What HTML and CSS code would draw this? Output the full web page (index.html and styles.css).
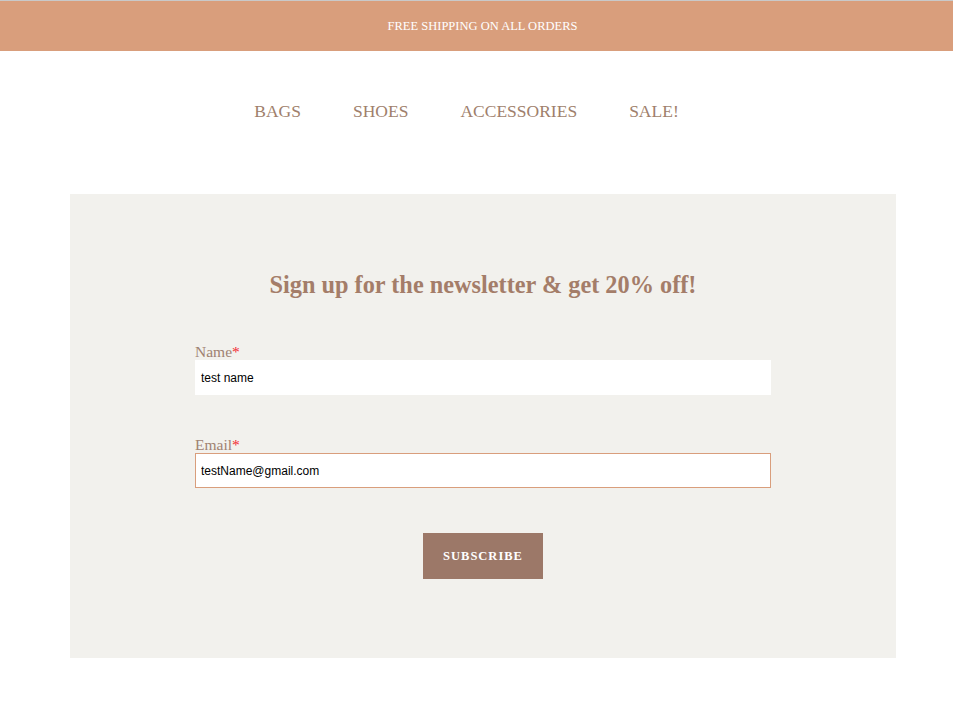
FILE: index.html
```html
<!DOCTYPE html>
<html>
<head>
<meta charset="utf-8">
<link rel="stylesheet" href="styles.css">
</head>
<body>
<div class="topline"></div>
<div class="banner">FREE SHIPPING ON ALL ORDERS</div>
<nav class="nav">
  <a href="#">BAGS</a>
  <a href="#">SHOES</a>
  <a href="#">ACCESSORIES</a>
  <a href="#">SALE!</a>
</nav>
<section class="signup">
  <h2 class="title">Sign up for the newsletter &amp; get 20% off!</h2>
  <form class="form">
    <label class="field">
      <span class="label">Name<span class="req">*</span></span>
      <input class="input" type="text" value="test name">
    </label>
    <label class="field">
      <span class="label">Email<span class="req">*</span></span>
      <input class="input focused" type="email" value="testName@gmail.com">
    </label>
    <div class="actions">
      <button class="btn" type="button">SUBSCRIBE</button>
    </div>
  </form>
</section>
</body>
</html>
```
FILE: styles.css
```css
* { box-sizing: border-box; }
html, body { margin: 0; padding: 0; background: #fff; }
body { font-family: "Liberation Serif", serif; }
.topline { height: 1px; background: #c9c9c9; }
.banner {
  height: 50px;
  background: #d99e7c;
  color: #fff;
  font-size: 12.5px;
  display: flex;
  align-items: center;
  justify-content: center;
  padding-left: 12px;
}
.nav {
  display: flex;
  justify-content: center;
  gap: 52px;
  padding: 50px 20px 0 0;
  height: 143px;
}
.nav a {
  color: #a07f6c;
  text-decoration: none;
  font-size: 17.5px;
  line-height: 20px;
}
.signup {
  margin-left: 70px;
  width: 826px;
  height: 464px;
  background: #f2f1ed;
  padding-top: 76px;
}
.title {
  margin: 0;
  text-align: center;
  color: #a47d69;
  font-size: 24.3px;
  font-weight: bold;
  line-height: 30px;
}
.form {
  width: 576px;
  margin: 44px auto 0;
}
.field { display: block; margin-bottom: 42px; }
.label {
  display: block;
  color: #a08272;
  font-size: 15.5px;
  line-height: 16px;
}
.req { color: #f2262f; }
.input {
  display: block;
  width: 576px;
  height: 35px;
  border: 1px solid #fff;
  background: #fff;
  padding: 0 5px;
  font-family: "Liberation Sans", Arial, sans-serif;
  font-size: 12px;
  color: #000;
  outline: none;
  margin: 0;
}
.input.focused { border-color: #d99e7c; }
.actions { display: flex; justify-content: center; padding-top: 3px; }
.btn {
  width: 120px;
  height: 46px;
  background: #9c7868;
  color: #fff;
  border: none;
  font-family: "Liberation Serif", serif;
  font-weight: bold;
  font-size: 12.5px;
  letter-spacing: 1px;
}
```
